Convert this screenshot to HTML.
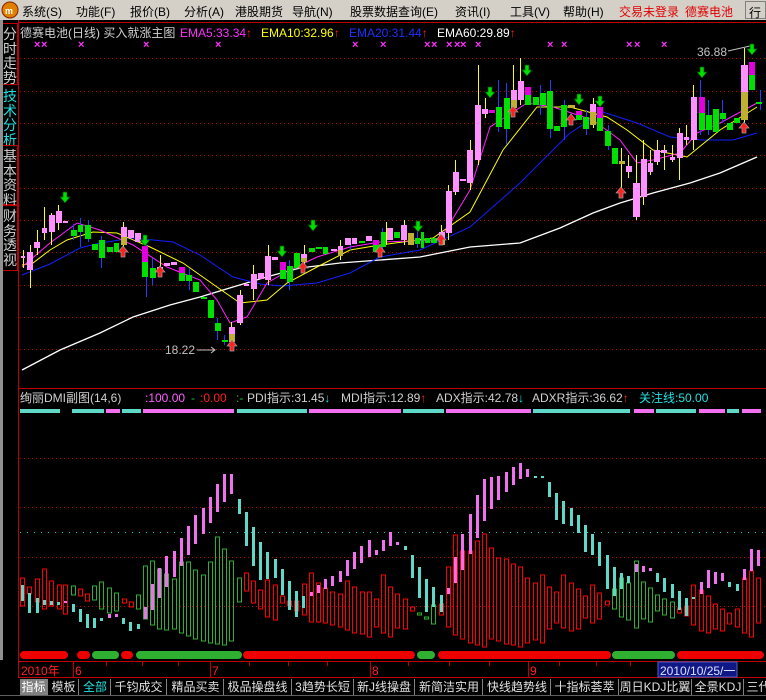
<!DOCTYPE html>
<html><head><meta charset="utf-8"><style>
*{margin:0;padding:0;box-sizing:border-box}
body{width:766px;height:700px;background:#000;overflow:hidden;position:relative;font-family:"Liberation Sans","Noto Sans CJK SC",sans-serif}
.menu{position:absolute;left:0;top:0;width:766px;height:20px;background:#d4d0c8;font-size:12px;color:#000}
.menu span{position:absolute;top:3px;white-space:nowrap}
.side{position:absolute;left:0;top:20px;width:18px;height:640px;background:#000}
.tab{position:absolute;left:3px;width:15px;border:1px solid #c00000;border-left:none;color:#d0d0d0;font-size:14px;line-height:14.5px;text-align:center;padding-top:3px}
.tabs{position:absolute;left:0;top:678px;width:766px;height:22px;background:#000;font-size:12px}
.tabs span{position:absolute;top:1px;height:17px;line-height:16px;color:#e0e0e0;border-right:1px solid #808080;text-align:center;white-space:nowrap}
</style></head><body>
<div class="menu">
<svg style="position:absolute;left:1px;top:1px" width="18" height="18"><circle cx="9" cy="9" r="8" fill="#e08000" stroke="#802000"/><text x="4" y="13" font-size="9" fill="#fff" font-weight="bold">m</text></svg>
<span style="left:22px">系统(S)</span><span style="left:76px">功能(F)</span><span style="left:130px">报价(B)</span><span style="left:184px">分析(A)</span><span style="left:235px">港股期货</span><span style="left:292px">导航(N)</span><span style="left:350px">股票数据查询(E)</span><span style="left:455px">资讯(I)</span><span style="left:510px">工具(V)</span><span style="left:563px">帮助(H)</span>
<span style="left:619px;color:#e00000">交易未登录</span><span style="left:685px;color:#e00000">德赛电池</span>
<span style="left:745px;top:1px;border:1px solid #808080;height:18px;width:21px;padding:2px 3px">行</span>
</div>
<div class="side">
<div style="position:absolute;left:0;top:0;width:3px;height:640px;background:#909090"></div>
<div class="tab" style="top:3px;height:62px">分<br>时<br>走<br>势</div>
<div class="tab" style="top:65px;height:60px;color:#20e0e0;border-color:#000">技<br>术<br>分<br>析</div>
<div class="tab" style="top:125px;height:60px">基<br>本<br>资<br>料</div>
<div class="tab" style="top:185px;height:66px">财<br>务<br>透<br>视</div>
</div>
<svg style="position:absolute;left:0;top:20px" width="766" height="658" viewBox="0 20 766 658">
<defs>
<path id="dn" d="M-2,-8h4v5h3l-5,6l-5,-6h3z" fill="#00e000" stroke="#005000" stroke-width="0.7"/>
<path id="up" d="M-2,8h4v-5h3l-5,-6l-5,6h3z" fill="#ff2020" stroke="#a0a0a0" stroke-width="0.7"/>
</defs>
<line x1="18.5" y1="20" x2="18.5" y2="678" stroke="#c00000"/>
<line x1="18" y1="22.5" x2="766" y2="22.5" stroke="#c00000"/>
<g stroke="#c00000" stroke-dasharray="1 3">
<line x1="20" y1="58.5" x2="766" y2="58.5"/><line x1="20" y1="91.5" x2="766" y2="91.5"/><line x1="20" y1="123.5" x2="766" y2="123.5"/><line x1="20" y1="155.5" x2="766" y2="155.5"/><line x1="20" y1="188.5" x2="766" y2="188.5"/><line x1="20" y1="220.5" x2="766" y2="220.5"/><line x1="20" y1="252.5" x2="766" y2="252.5"/><line x1="20" y1="285.5" x2="766" y2="285.5"/><line x1="20" y1="317.5" x2="766" y2="317.5"/><line x1="20" y1="349.5" x2="766" y2="349.5"/>
<line x1="20" y1="458.5" x2="766" y2="458.5"/><line x1="20" y1="507.5" x2="766" y2="507.5"/><line x1="20" y1="557.5" x2="766" y2="557.5"/><line x1="20" y1="606.5" x2="766" y2="606.5"/>
</g>
<line x1="20" y1="532.5" x2="766" y2="532.5" stroke="#00d0d0" stroke-dasharray="1 6"/>
<g font-size="12">
<text x="20" y="37" fill="#d0d0d0">德赛电池(日线) 买入就涨主图</text>
<text x="180" y="37" fill="#ff30ff">EMA5:33.34<tspan fill="#ff2020">↑</tspan></text>
<text x="261" y="37" fill="#ffff00">EMA10:32.96<tspan fill="#ff2020">↑</tspan></text>
<text x="349" y="37" fill="#2030ff">EMA20:31.44<tspan fill="#ff2020">↑</tspan></text>
<text x="437" y="37" fill="#ffffff">EMA60:29.89<tspan fill="#ff2020">↑</tspan></text>
</g>
<g font-size="11" fill="#ff30ff" font-weight="bold">
<text x="34" y="48">×</text><text x="41" y="48">×</text><text x="78" y="48">×</text><text x="143" y="48">×</text><text x="215" y="48">×</text><text x="352" y="48">×</text><text x="380" y="48">×</text><text x="424" y="48">×</text><text x="431" y="48">×</text><text x="446" y="48">×</text><text x="454" y="48">×</text><text x="460" y="48">×</text><text x="475" y="48">×</text><text x="547" y="48">×</text><text x="561" y="48">×</text><text x="626" y="48">×</text><text x="634" y="48">×</text><text x="661" y="48">×</text>
</g>
<text x="697" y="56" font-size="12" fill="#c0c0c0">36.88</text>
<path d="M728,51L750,46" stroke="#c0c0c0"/>
<text x="165" y="354" font-size="12" fill="#c0c0c0">18.22</text>
<path d="M197,350H215M211,347L215,350L211,353" stroke="#c0c0c0" fill="none"/>
<polyline fill="none" stroke="#ffffff" stroke-width="1.3" points="22,370 60,350 100,333 133,317 170,305 200,297 233,287 270,276 300,268 340,263 380,260 420,257 470,247 520,243 560,228 593,213 620,203 653,193 690,183 720,173 757,157"/>
<polyline fill="none" stroke="#1020ff" points="22,275 50,264 80,248 100,243 133,238 173,242 200,255 233,277 260,284 283,286 317,283 350,273 380,257 420,250 470,227 520,183 570,133 603,112 637,123 670,137 703,140 733,140 757,133"/>
<polyline fill="none" stroke="#ffff00" points="22,265 33,263 50,250 67,240 93,232 117,233 150,247 183,263 217,287 240,303 267,300 287,283 317,267 350,250 380,245 433,238 470,212 503,150 537,107 570,107 607,117 627,130 653,150 687,157 720,130 757,107"/>
<polyline fill="none" stroke="#ff20ff" points="22,267 50,243 77,223 100,230 133,245 167,267 200,280 217,300 230,323 247,317 267,283 290,270 317,257 350,247 380,242 440,240 470,190 490,127 527,103 553,107 593,120 620,140 637,163 653,160 680,153 697,133 720,123 757,103"/>
<path stroke="#ffff00" fill="none" d="M23.5,250V268M30.5,245V288M37.5,230V255M44.5,207V240M51.5,213V245M58.5,205V230M123.5,222V255M160.5,255V275M231.5,322V348M240.5,290V325M253.5,265V300M268.5,245V285M304.5,245V265M340.5,240V260M386.5,222V245M404.5,220V245M441.5,225V245M448.5,185V240M455.5,160V195M470.5,140V190M478.5,65V165M485.5,98V118M513.5,65V110M520.5,58V105M593.5,98V128M621.5,148V190M628.5,155V178M636.5,155V220M643.5,140V205M650.5,150V175M657.5,140V165M664.5,145V170M672.5,145V162M679.5,128V180M686.5,125V145M693.5,85V150M744.5,48V123"/>
<path stroke="#2040ff" fill="none" d="M73.5,224V240M80.5,218V247M88.5,220V242M101.5,236V268M146.5,240V297M152.5,258V285M189.5,268V290M217.5,318V340M224.5,335V345M289.5,260V290M350.5,241V250M382.5,228V252M417.5,230V248M498.5,80V132M506.5,83V145M540.5,85V115M550.5,80V138M564.5,100V140M586.5,110V135M608.5,125V150M700.5,80V135M708.5,100V135M722.5,100V123M760.5,90V110"/>
<path fill="#ff90ff" d="M21,256H25V258H21ZM27,252H33V270H27ZM34,242H40V248H34ZM42,228H47V233H42ZM49,215H55V232H49ZM56,211H62V223H56ZM63,221H68V223H63ZM121,227H127V237H121ZM128,230H134V238H128ZM135,233H141V242H135ZM157,267H163V270H157ZM164,263H170V266H164ZM171,262H177V265H171ZM229,327H235V334H229ZM237,295H243V323H237ZM244,284H249V286H244ZM251,274H257V289H251ZM258,273H264V279H258ZM265,256H271V280H265ZM272,257H278V260H272ZM301,254H307V258H301ZM331,249H337V251H331ZM338,246H343V250H338ZM345,238H351V245H345ZM352,238H357V244H352ZM366,236H372V241H366ZM387,228H393V240H387ZM401,225H407V240H401ZM439,232H445V238H439ZM446,191H452V233H446ZM453,172H459V192H453ZM460,179H466V181H460ZM467,150H473V183H467ZM475,105H481V160H475ZM482,109H488V114H482ZM511,90H517V100H511ZM518,81H524V100H518ZM590,104H596V112H590ZM626,166H632V172H626ZM633,183H640V217H633ZM641,159H647V197H641ZM648,163H653V172H648ZM654,150H660V162H654ZM661,150H667V153H661ZM670,157H675V160H670ZM677,133H683V158H677ZM684,137H689V140H684ZM691,97H697V140H691ZM741,65H748V92H741Z"/>
<path fill="#c0b030" d="M121,237H127V245H121ZM301,258H307V262H301ZM229,334H235V342H229ZM338,250H343V256H338ZM408,233H414V245H408ZM439,238H445V245H439ZM511,100H517V108H511ZM568,105H575V108H568ZM590,112H596V125H590ZM619,161H625V164H619ZM741,92H748V120H741Z"/>
<path fill="#e000e0" d="M142,246H148V262H142ZM179,267H185V273H179ZM280,262H286V270H280ZM373,240H379V245H373ZM489,110H495V113H489ZM525,87H531V95H525ZM576,111H582V115H576ZM597,107H603V118H597ZM699,97H705V113H699ZM749,62H755V75H749Z"/>
<path fill="#00e000" d="M71,230H77V236H71ZM78,225H83V232H78ZM85,225H91V239H85ZM92,244H98V250H92ZM99,240H105V258H99ZM107,247H113V252H107ZM114,243H119V252H114ZM142,262H148V277H142ZM150,268H156V278H150ZM179,273H185V281H179ZM186,275H192V281H186ZM193,282H199V292H193ZM201,297H207V299H201ZM208,300H214V318H208ZM215,323H221V331H215ZM222,340H228V342H222ZM280,270H286V279H280ZM287,266H293V282H287ZM294,253H300V268H294ZM309,248H315V252H309ZM316,247H322V249H316ZM323,247H328V254H323ZM359,241H365V243H359ZM373,245H379V252H373ZM381,232H386V247H381ZM394,232H400V238H394ZM415,238H420V244H415ZM421,232H424V248H421ZM425,238H430V243H425ZM431,238H437V243H431ZM496,107H502V127H496ZM504,98H510V129H504ZM525,95H531V105H525ZM533,97H539V105H533ZM540,93H546V105H540ZM547,91H553V129H547ZM554,126H560V131H554ZM561,105H567V127H561ZM576,115H582V120H576ZM583,117H589V129H583ZM597,118H603V131H597ZM605,131H611V146H605ZM612,148H618V164H612ZM699,113H705V130H699ZM706,115H712V130H706ZM713,109H719V132H713ZM720,113H726V119H720ZM727,123H733V130H727ZM734,118H740V123H734ZM749,75H755V90H749ZM756,102H762V104H756Z"/>
<use href="#dn" x="65" y="200"/><use href="#dn" x="145" y="243"/><use href="#dn" x="282" y="254"/><use href="#dn" x="313" y="228"/><use href="#dn" x="418" y="229"/><use href="#dn" x="490" y="95"/><use href="#dn" x="527" y="73"/><use href="#dn" x="579" y="102"/><use href="#dn" x="600" y="104"/><use href="#dn" x="702" y="75"/><use href="#dn" x="752" y="52"/>
<use href="#up" x="123" y="249"/><use href="#up" x="160" y="269"/><use href="#up" x="232" y="343"/><use href="#up" x="303" y="265"/><use href="#up" x="380" y="249"/><use href="#up" x="441" y="237"/><use href="#up" x="513" y="109"/><use href="#up" x="571" y="117"/><use href="#up" x="621" y="190"/><use href="#up" x="744" y="125"/>
<line x1="18" y1="388.5" x2="766" y2="388.5" stroke="#c00000"/>
<g font-size="12">
<text x="20" y="402" fill="#d0d0d0">绚丽DMI副图(14,6)</text>
<text x="145" y="402" fill="#ff60ff">:100.00</text><text x="191" y="402" fill="#20c040">-</text>
<text x="200" y="402" fill="#ff2020">:0.00</text><text x="236" y="402" fill="#20c040">:-</text>
<text x="247" y="402" fill="#d0d0d0">PDI指示:31.45<tspan fill="#20e0e0">↓</tspan></text>
<text x="341" y="402" fill="#d0d0d0">MDI指示:12.89<tspan fill="#ff2020">↑</tspan></text>
<text x="436" y="402" fill="#d0d0d0">ADX指示:42.78<tspan fill="#20e0e0">↓</tspan></text>
<text x="532" y="402" fill="#d0d0d0">ADXR指示:36.62<tspan fill="#ff2020">↑</tspan></text>
<text x="639" y="402" fill="#20e0e0">关注线:50.00</text>
</g>
<g stroke-width="4" stroke-linecap="butt">
<path stroke="#60d8c8" d="M20,411H60M72,411H104M122,411H141M237,411H307M403,411H444M533,411H630M656,411H696M727,411H739"/>
<path stroke="#f070f0" d="M106,411H120M143,411H234M309,411H401M446,411H531M634,411H654M699,411H725M742,411H761"/>
</g>
<g fill="none" stroke="#ff0000">
<path d="M20.5,578h4v28h-4zM27.5,587h4v7h-4zM35.5,579h4v23h-4zM42.5,569h4v40h-4zM49.5,581h4v25h-4zM57.5,585h4v24h-4zM63.5,585h4v29h-4zM78.5,589h4v7h-4zM85.5,594h4v7h-4zM122.5,599h4v4h-4zM129.5,602h4v5h-4zM244.5,573h4v18h-4zM251.5,581h4v22h-4zM258.5,590h4v19h-4zM265.5,580h4v37h-4zM273.5,585h4v35h-4zM280.5,596h4v7h-4zM287.5,601h4v5h-4zM294.5,601h4v10h-4zM302.5,584h4v31h-4zM309.5,573h4v49h-4zM316.5,583h4v39h-4zM323.5,588h4v35h-4zM330.5,592h4v33h-4zM338.5,594h4v33h-4zM345.5,581h4v49h-4zM352.5,587h4v46h-4zM360.5,592h4v42h-4zM367.5,592h4v45h-4zM374.5,599h4v28h-4z"/>
<path d="M381.5,575h4v58h-4zM388.5,587h4v50h-4zM395.5,594h4v34h-4zM403.5,599h4v30h-4zM410.5,607h4v4h-4zM439.5,604h4v11h-4zM446.5,567h4v60h-4zM453.5,535h4v100h-4zM460.5,551h4v88h-4zM468.5,551h4v92h-4zM475.5,541h4v104h-4zM482.5,534h4v113h-4zM489.5,548h4v91h-4zM496.5,558h4v83h-4zM504.5,559h4v85h-4zM511.5,564h4v81h-4zM518.5,567h4v80h-4zM525.5,578h4v65h-4zM533.5,583h4v57h-4zM540.5,575h4v68h-4zM547.5,587h4v42h-4zM554.5,592h4v31h-4zM561.5,575h4v53h-4zM569.5,583h4v48h-4zM576.5,589h4v40h-4zM583.5,596h4v22h-4zM590.5,585h4v38h-4zM597.5,593h4v26h-4zM605.5,601h4v4h-4zM677.5,608h4v5h-4zM684.5,606h4v10h-4zM691.5,585h4v40h-4zM699.5,590h4v41h-4zM706.5,596h4v37h-4zM713.5,604h4v25h-4zM720.5,609h4v22h-4zM727.5,613h4v11h-4zM735.5,609h4v18h-4zM742.5,578h4v55h-4zM749.5,571h4v66h-4zM756.5,578h4v45h-4z"/>
</g>
<g fill="none" stroke="#30b030">
<path d="M71.5,586h4v9h-4zM92.5,586h4v14h-4zM99.5,582h4v27h-4zM107.5,588h4v25h-4zM114.5,593h4v18h-4zM136.5,595h4v14h-4zM143.5,566h4v53h-4zM150.5,561h4v64h-4zM157.5,569h4v60h-4zM164.5,574h4v56h-4zM172.5,579h4v50h-4zM179.5,562h4v71h-4zM186.5,562h4v74h-4zM193.5,570h4v69h-4zM201.5,575h4v66h-4zM208.5,562h4v81h-4zM215.5,537h4v107h-4zM222.5,549h4v96h-4zM229.5,561h4v80h-4zM237.5,578h4v24h-4zM417.5,613h4v2h-4zM424.5,617h4v2h-4zM431.5,605h4v19h-4zM612.5,589h4v20h-4zM619.5,578h4v39h-4zM626.5,583h4v37h-4zM634.5,561h4v67h-4zM641.5,582h4v37h-4zM648.5,588h4v34h-4zM655.5,595h4v16h-4zM662.5,599h4v16h-4zM670.5,602h4v16h-4z"/>
</g>
<path fill="#60d8c8" d="M21,585h3v16h-3zM28,593h3v20h-3zM36,598h3v15h-3zM43,600h3v5h-3zM50,601h3v4h-3zM57,602h3v3h-3zM72,604h3v8h-3zM79,609h3v13h-3zM86,614h3v14h-3zM93,618h3v10h-3zM100,618h3v3h-3zM122,618h3v6h-3zM129,622h3v9h-3zM137,624h3v5h-3zM238,499h3v15h-3zM245,512h3v34h-3zM252,527h3v39h-3zM259,542h3v38h-3zM266,552h3v27h-3zM274,559h3v19h-3zM281,569h3v26h-3zM288,581h3v29h-3zM295,591h3v26h-3zM302,596h3v12h-3zM404,546h3v4h-3zM411,555h3v23h-3zM418,567h3v31h-3zM425,579h3v33h-3zM432,587h3v20h-3zM440,595h3v17h-3zM534,476h3v2h-3zM541,476h3v2h-3zM548,482h3v15h-3zM555,493h3v27h-3zM562,501h3v23h-3zM570,508h3v18h-3zM577,515h3v18h-3zM584,525h3v27h-3zM591,534h3v21h-3zM598,542h3v24h-3zM606,555h3v34h-3zM613,567h3v29h-3zM620,573h3v16h-3zM627,576h3v7h-3zM656,573h3v9h-3zM663,578h3v14h-3zM671,584h3v14h-3zM678,591h3v19h-3zM685,598h3v18h-3zM692,597h3v2h-3zM728,582h3v5h-3zM736,584h3v7h-3z"/>
<path fill="#f070f0" d="M64,601h3v2h-3zM108,614h3v4h-3zM115,614h3v3h-3zM144,607h3v12h-3zM151,584h3v26h-3zM158,568h3v30h-3zM165,556h3v31h-3zM173,551h3v26h-3zM180,538h3v28h-3zM187,526h3v29h-3zM194,515h3v29h-3zM202,508h3v26h-3zM209,497h3v26h-3zM216,484h3v28h-3zM223,474h3v28h-3zM230,474h3v20h-3zM310,592h3v4h-3zM317,585h3v8h-3zM324,579h3v10h-3zM331,576h3v10h-3zM339,571h3v11h-3zM346,560h3v16h-3zM353,552h3v17h-3zM360,546h3v17h-3zM368,540h3v17h-3zM375,550h3v5h-3zM382,540h3v11h-3zM389,532h3v14h-3zM396,542h3v3h-3zM447,588h3v6h-3zM454,557h3v26h-3zM461,534h3v36h-3zM469,514h3v40h-3zM476,495h3v43h-3zM483,479h3v42h-3zM490,477h3v32h-3zM497,476h3v24h-3zM505,472h3v20h-3zM512,467h3v18h-3zM519,463h3v16h-3zM526,469h3v8h-3zM635,564h3v8h-3zM642,566h3v6h-3zM649,568h3v3h-3zM700,582h3v12h-3zM707,570h3v18h-3zM714,572h3v12h-3zM721,573h3v8h-3zM743,569h3v11h-3zM750,549h3v22h-3zM757,550h3v16h-3z"/>
<g stroke-width="8" stroke-linecap="round">
<path stroke="#ee0000" d="M24,655H64M81,655H86M125,655H129M247,655H411M442,655H607M681,655H760"/>
<path stroke="#30b030" d="M96,655H115M140,655H238M421,655H431M616,655H671"/>
</g>
<line x1="18" y1="661.5" x2="766" y2="661.5" stroke="#c00000"/>
<line x1="18" y1="677.5" x2="766" y2="677.5" stroke="#c00000"/>
<path stroke="#c00000" d="M73.5,662V677M210.5,662V677M370.5,662V677M528.5,662V677M106.5,662V666M142.5,662V666M178.5,662V666M249.5,662V666M288.5,662V666M327.5,662V666M408.5,662V666M449.5,662V666M489.5,662V666M559.5,662V666M596.5,662V666M630.5,662V666"/>
<g font-size="12" fill="#ff2020">
<text x="21" y="675">2010年</text><text x="75" y="675">6</text><text x="212" y="675">7</text><text x="372" y="675">8</text><text x="530" y="675">9</text>
</g>
<rect x="658" y="662" width="79" height="15" fill="#101888" stroke="#5060c0"/>
<text x="660" y="675" font-size="12" fill="#e0e0ff">2010/10/25/一</text>
</svg>
<div class="tabs">
<span style="left:20px;width:28px;background:#808080;color:#fff">指标</span>
<span style="left:49px;width:30px">模板</span>
<span style="left:80px;width:31px;color:#20e0e0">全部</span>
<span style="left:111px;width:56px">千钧成交</span>
<span style="left:168px;width:56px">精品买卖</span>
<span style="left:224px;width:68px">极品操盘线</span>
<span style="left:292px;width:62px">3趋势长短</span>
<span style="left:354px;width:61px">新J线操盘</span>
<span style="left:416px;width:67px">新简洁实用</span>
<span style="left:484px;width:67px">快线趋势线</span>
<span style="left:551px;width:68px">十指标荟萃</span>
<span style="left:619px;width:73px">周日KDJ比翼</span>
<span style="left:693px;width:51px">全景KDJ</span>
<span style="left:744px;width:30px">三代</span>
<div style="position:absolute;left:0;top:17px;width:766px;height:5px;background:#000;border-top:1px solid #606060"></div>
</div>
</body></html>
